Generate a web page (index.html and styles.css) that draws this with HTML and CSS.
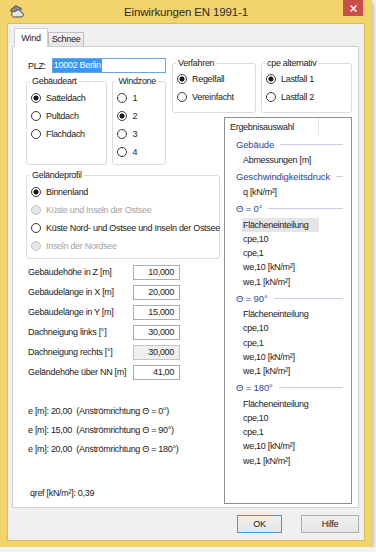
FILE: index.html
```html
<!DOCTYPE html>
<html lang="de">
<head>
  <meta charset="UTF-8">
  <meta name="viewport" content="width=device-width, initial-scale=1.0">
  <title>Einwirkungen EN 1991-1</title>
  <link rel="stylesheet" href="styles.css">
</head>
<body>
  <div class="window">
    <div class="titlebar">
      <svg class="app-icon" width="14" height="13" viewBox="0 0 14 13">
        <path d="M2 7.5 a2.3 2.3 0 0 1 1.2-4.3 a3 3 0 0 1 5.6-0.6 a2.2 2.2 0 0 1 2.6 2.2" fill="#8a8a8a" stroke="#4a4a4a" stroke-width="1"/>
        <path d="M3.5 12 h7.5 a2.2 2.2 0 0 0 0.3-4.4 a3 3 0 0 0-5.6-1.2 a2.4 2.4 0 0 0-2.2 5.6z" fill="#e4e4e4" stroke="#4a4a4a" stroke-width="1"/>
      </svg>
      <div class="title">Einwirkungen EN 1991-1</div>
      <div class="close">
        <svg width="7" height="7" viewBox="0 0 7 7"><path d="M0.5 0.5 L6.5 6.5 M6.5 0.5 L0.5 6.5" stroke="#fff" stroke-width="1.5"/></svg>
      </div>
    </div>

    <div class="client">
      <div class="tabs">
        <div class="tab active">Wind</div>
        <div class="tab">Schnee</div>
      </div>

      <div class="panel">
        <div class="plz">
          <span class="plz-label">PLZ:</span>
          <span class="textbox focus"><span class="selected-text">10002 Berlin</span></span>
        </div>

        <div class="top-groups">
          <fieldset class="group verfahren">
            <legend>Verfahren</legend>
            <div class="opts">
              <div class="radio checked"><span class="dot"></span>Regelfall</div>
              <div class="radio"><span class="dot"></span>Vereinfacht</div>
            </div>
          </fieldset>
          <fieldset class="group cpe">
            <legend>cpe alternativ</legend>
            <div class="opts">
              <div class="radio checked"><span class="dot"></span>Lastfall 1</div>
              <div class="radio"><span class="dot"></span>Lastfall 2</div>
            </div>
          </fieldset>
        </div>

        <div class="type-groups">
          <fieldset class="group gebaeudeart">
            <legend>Gebäudeart</legend>
            <div class="opts">
              <div class="radio checked"><span class="dot"></span>Satteldach</div>
              <div class="radio"><span class="dot"></span>Pultdach</div>
              <div class="radio"><span class="dot"></span>Flachdach</div>
            </div>
          </fieldset>
          <fieldset class="group windzone">
            <legend>Windzone</legend>
            <div class="opts">
              <div class="radio"><span class="dot"></span>1</div>
              <div class="radio checked"><span class="dot"></span>2</div>
              <div class="radio"><span class="dot"></span>3</div>
              <div class="radio"><span class="dot"></span>4</div>
            </div>
          </fieldset>
        </div>

        <div class="results">
          <div class="results-head"><div class="col">Ergebnisauswahl</div></div>
          <div class="group-head">Gebäude</div>
          <div class="item">Abmessungen [m]</div>
          <div class="group-head">Geschwindigkeitsdruck</div>
          <div class="item">q [kN/m²]</div>
          <div class="group-head">Θ = 0°</div>
          <div class="item sel">Flächeneinteilung</div>
          <div class="item">cpe,10</div>
          <div class="item">cpe,1</div>
          <div class="item">we,10 [kN/m²]</div>
          <div class="item">we,1 [kN/m²]</div>
          <div class="group-head">Θ = 90°</div>
          <div class="item">Flächeneinteilung</div>
          <div class="item">cpe,10</div>
          <div class="item">cpe,1</div>
          <div class="item">we,10 [kN/m²]</div>
          <div class="item">we,1 [kN/m²]</div>
          <div class="group-head">Θ = 180°</div>
          <div class="item">Flächeneinteilung</div>
          <div class="item">cpe,10</div>
          <div class="item">cpe,1</div>
          <div class="item">we,10 [kN/m²]</div>
          <div class="item">we,1 [kN/m²]</div>
        </div>

        <div class="lower">
          <fieldset class="group gelaende">
            <legend>Geländeprofil</legend>
            <div class="opts">
              <div class="radio checked"><span class="dot"></span>Binnenland</div>
              <div class="radio disabled"><span class="dot"></span>Küste und Inseln der Ostsee</div>
              <div class="radio"><span class="dot"></span>Küste Nord- und Ostsee und Inseln der Ostsee</div>
              <div class="radio disabled"><span class="dot"></span>Inseln der Nordsee</div>
            </div>
          </fieldset>

          <div class="fields">
            <div class="field"><span class="field-label">Gebäudehöhe in Z [m]</span><span class="textbox num">10,000</span></div>
            <div class="field"><span class="field-label">Gebäudelänge in X [m]</span><span class="textbox num">20,000</span></div>
            <div class="field"><span class="field-label">Gebäudelänge in Y [m]</span><span class="textbox num">15,000</span></div>
            <div class="field"><span class="field-label">Dachneigung links [°]</span><span class="textbox num">30,000</span></div>
            <div class="field"><span class="field-label">Dachneigung rechts [°]</span><span class="textbox num readonly">30,000</span></div>
            <div class="field"><span class="field-label">Geländehöhe über NN [m]</span><span class="textbox num">41,00</span></div>
          </div>

          <div class="e-lines">
            <div class="e-line">e [m]: 20,00  (Anströmrichtung Θ = 0°)</div>
            <div class="e-line">e [m]: 15,00  (Anströmrichtung Θ = 90°)</div>
            <div class="e-line">e [m]: 20,00  (Anströmrichtung Θ = 180°)</div>
          </div>

          <div class="qref">qref [kN/m²]: 0,39</div>
        </div>
      </div>

      <div class="buttons">
        <div class="button default ok">OK</div>
        <div class="button help">Hilfe</div>
      </div>
    </div>
  </div>
</body>
</html>
```

FILE: styles.css
```css
* {
  box-sizing: border-box;
}

body {
  margin: 0;
  background: #f4f4f4;
  font-family: "Liberation Sans", Arial, sans-serif;
  font-size: 9px;
  letter-spacing: -0.3px;
  color: #1a1a1a;
}

.window {
  width: 372px;
  height: 547px;
  display: flex;
  flex-direction: column;
  padding: 0 7px 6px;
  background: #f2d46c;
  box-shadow: 1px 2px 4px rgba(0, 0, 0, 0.3);
}

.titlebar {
  height: 23px;
  display: grid;
  grid-template-columns: 1fr auto 1fr;
  align-items: start;
}

.app-icon {
  margin: 5px 0 0 3px;
}

.title {
  font-size: 11.5px;
  letter-spacing: -0.15px;
  line-height: 24px;
  color: #2a2a2a;
}

.close {
  justify-self: end;
  width: 20px;
  height: 16px;
  margin-right: 2px;
  background: #c94f48;
  display: flex;
  justify-content: center;
  align-items: center;
}

.client {
  flex: 1;
  min-height: 0;
  background: #f0f0f0;
  border: 1px solid #dcbc55;
  padding: 4px 5px 0 4px;
}

/* tabs */

.tabs {
  height: 19px;
  margin: 0 0 -1px 2px;
  display: flex;
  align-items: flex-end;
  position: relative;
  z-index: 1;
}

.tab {
  width: 36px;
  height: 14px;
  margin-bottom: 1px;
  border: 1px solid #bdbdbd;
  border-bottom: none;
  background: linear-gradient(#f2f2f2, #e6e6e6);
  text-align: center;
  line-height: 13px;
}

.tab.active {
  width: 34px;
  height: 19px;
  margin-bottom: 0;
  background: #fff;
  border-color: #cfcfcf;
  line-height: 18px;
}

.panel {
  height: 462px;
  background: #fff;
  border: 1px solid #d0d0d0;
  padding: 11px 5px 3px 13px;
  display: grid;
  grid-template-columns: 140px 58px 128px;
  grid-template-rows: 18px 41px 53px 1fr;
  grid-template-areas:
    "plz top top"
    "grp top top"
    "grp . list"
    "low low list";
}

/* text boxes */

.textbox {
  display: block;
  height: 15px;
  border: 1px solid #abadb3;
  background: #fff;
  line-height: 13px;
  white-space: nowrap;
}

.textbox.focus {
  border-color: #6ea6dc;
}

.textbox.num {
  width: 47px;
  text-align: right;
  padding-right: 5px;
}

.textbox.readonly {
  background: #f0f0f0;
  border-color: #c4c4c4;
}

.plz {
  grid-area: plz;
  height: 15px;
  display: flex;
  align-items: center;
}

.plz-label {
  width: 26px;
  padding-left: 2px;
}

.plz .textbox {
  width: 115px;
}

.selected-text {
  display: inline-block;
  height: 13px;
  padding: 0 1px;
  background: #3399ff;
  color: #fff;
}

/* group boxes and radios */

.group {
  margin: 0;
  padding: 0;
  border: 1px solid #dcdcdc;
  border-radius: 3px;
  min-width: 0;
}

.group legend {
  margin-left: 3px;
  padding: 0 2px;
  line-height: 11px;
}

.opts {
  padding: 1px 0 0 4px;
}

.radio {
  height: 18px;
  display: flex;
  align-items: center;
  white-space: nowrap;
}

.dot {
  width: 10px;
  height: 10px;
  margin-right: 5px;
  flex: none;
  border: 1px solid #3a3a3a;
  border-radius: 50%;
  background: #fff;
}

.radio.checked .dot {
  background: radial-gradient(circle, #1a1a1a 2.2px, #fff 2.9px);
}

.radio.disabled {
  color: #a3a3a3;
}

.radio.disabled .dot {
  border-color: #c4c4c4;
  background: #e6e6e6;
}

.top-groups {
  grid-area: top;
  display: flex;
  gap: 5px;
  padding-left: 6px;
}

.verfahren {
  width: 84px;
  height: 55px;
}

.cpe {
  width: 91px;
  height: 55px;
}

.type-groups {
  grid-area: grp;
  display: flex;
  gap: 5px;
}

.gebaeudeart {
  width: 82px;
  height: 89px;
}

.windzone {
  width: 54px;
  height: 89px;
}

.gebaeudeart .opts,
.windzone .opts {
  padding-top: 2px;
}

/* lower left area */

.lower {
  grid-area: low;
  min-height: 0;
}

.gelaende {
  width: 194px;
  height: 89px;
}

.gelaende .opts {
  padding-top: 2px;
}

.fields {
  margin-top: 3px;
}

.field {
  height: 20px;
  display: flex;
  align-items: center;
}

.field-label {
  width: 107px;
  padding-left: 2px;
}

.e-lines {
  margin-top: 20px;
  padding-left: 2px;
  line-height: 19px;
}

.e-line {
  white-space: pre;
}

.qref {
  margin-top: 25px;
  padding-left: 4px;
  line-height: 19px;
}

/* result list */

.results {
  grid-area: list;
  min-height: 0;
  border: 1px solid #8e8e8e;
  background: #fff;
  overflow: hidden;
}

.results-head {
  height: 17px;
  display: flex;
}

.results-head .col {
  width: 94px;
  padding: 2px 0 0 5px;
  line-height: 15px;
  border-right: 1px solid #e5e5e5;
}

.group-head {
  height: 18px;
  display: flex;
  align-items: center;
  padding: 0 8px 0 11px;
  color: #2f3f9f;
  font-size: 9.5px;
  letter-spacing: -0.15px;
  white-space: nowrap;
}

.group-head::after {
  content: "";
  flex: 1;
  height: 1px;
  margin-left: 6px;
  background: #c9cee9;
}

.item {
  width: 77px;
  height: 14.3px;
  margin-left: 17px;
  padding-left: 1px;
  line-height: 14.3px;
  white-space: nowrap;
}

.item.sel {
  background: #e5e5e5;
}

/* buttons */

.buttons {
  margin-top: 7px;
  display: flex;
  justify-content: flex-end;
  gap: 19px;
}

.button {
  height: 18px;
  border: 1px solid #acacac;
  background: linear-gradient(#f0f0f0, #e5e5e5);
  text-align: center;
  line-height: 16px;
}

.button.default {
  border-color: #4b95d8;
}

.ok {
  width: 45px;
}

.help {
  width: 58px;
}
```
